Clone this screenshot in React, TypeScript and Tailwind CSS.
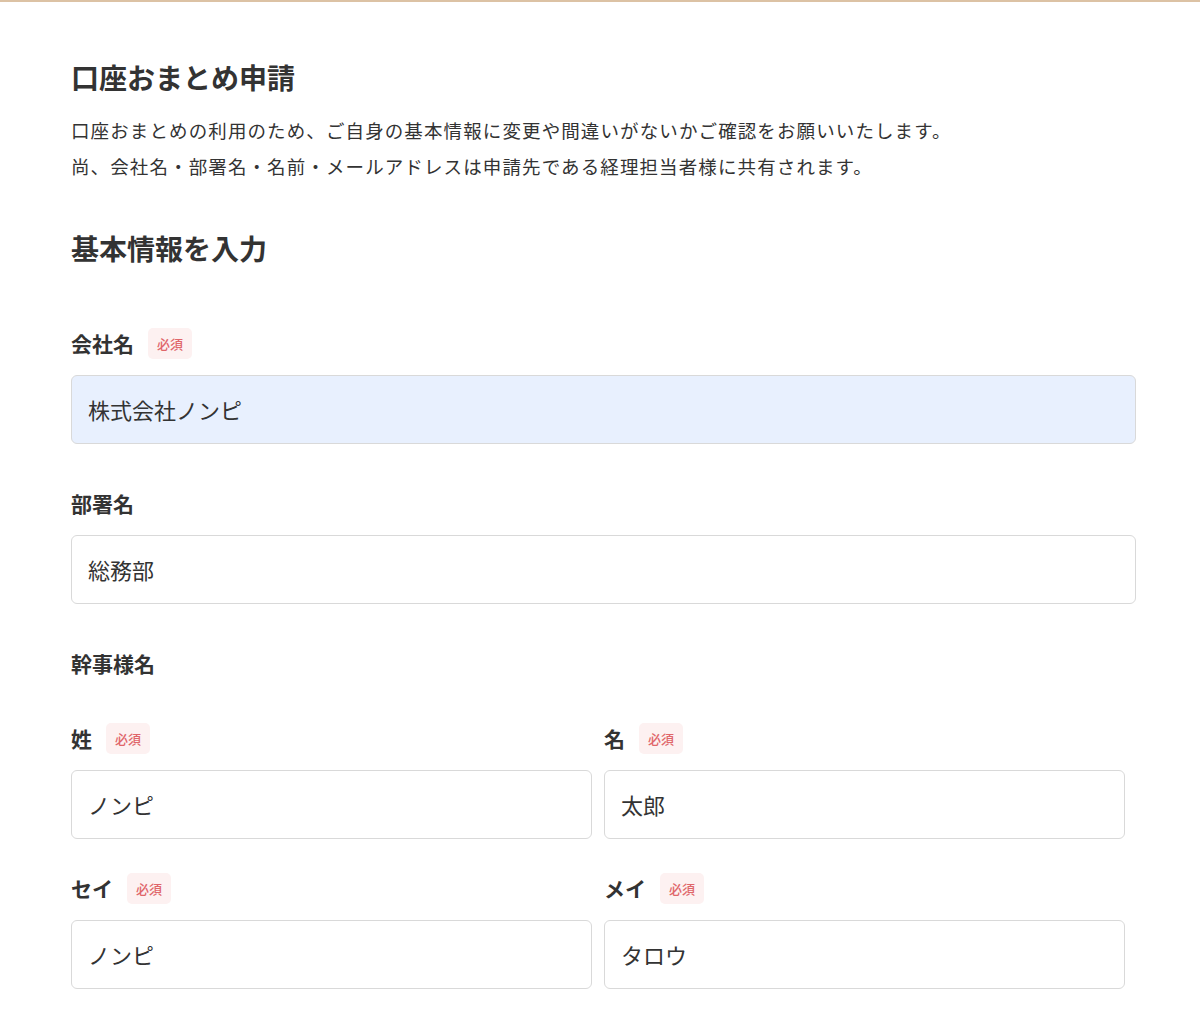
const font = { fontFamily: '"Noto Sans CJK JP", "Noto Sans", sans-serif' };

function Required() {
  return (
    <span className="ml-[14px] inline-flex h-[31px] w-[44px] items-center justify-center rounded-[5px] bg-[#fdf1f1] text-[13px] font-medium text-[#e0666a]">
      必須
    </span>
  );
}

function Label({ text, required }: { text: string; required?: boolean }) {
  return (
    <div className="flex h-[31px] items-center">
      <span className="text-[21px] font-bold leading-none text-[#333]">{text}</span>
      {required && <Required />}
    </div>
  );
}

function Input({ value, filled }: { value: string; filled?: boolean }) {
  return (
    <div
      className={`mt-4 flex h-[69px] items-center rounded-[6px] border border-[#d9d9d9] px-4 text-[22px] text-[#333] ${
        filled ? "bg-[#e8f0fe]" : "bg-white"
      }`}
    >
      {value}
    </div>
  );
}

export default function App() {
  return (
    <div className="min-h-screen bg-white" style={font}>
      <div className="h-[2px] bg-[#dcc2a4]" />
      <main className="px-[71px] pt-[55px] pb-10">
        <h1 className="text-[28px] font-bold leading-[40px] text-[#333]">口座おまとめ申請</h1>
        <p className="mt-[15px] text-[18.5px] leading-[36px] tracking-[0.06em] text-[#333]">
          口座おまとめの利用のため、ご自身の基本情報に変更や間違いがないかご確認をお願いいたします。
          <br />
          尚、会社名・部署名・名前・メールアドレスは申請先である経理担当者様に共有されます。
        </p>
        <h2 className="mt-[44px] text-[28px] font-bold leading-[40px] text-[#333]">基本情報を入力</h2>

        <div className="mt-[60px] w-[1065px]">
          <Label text="会社名" required />
          <Input value="株式会社ノンピ" filled />
        </div>

        <div className="mt-[44px] w-[1065px]">
          <Label text="部署名" />
          <Input value="総務部" />
        </div>

        <div className="mt-[44px]">
          <Label text="幹事様名" />
        </div>

        <div className="mt-[44px] grid w-[1054px] grid-cols-2 gap-x-3 gap-y-[34px]">
          <div>
            <Label text="姓" required />
            <Input value="ノンピ" />
          </div>
          <div>
            <Label text="名" required />
            <Input value="太郎" />
          </div>
          <div>
            <Label text="セイ" required />
            <Input value="ノンピ" />
          </div>
          <div>
            <Label text="メイ" required />
            <Input value="タロウ" />
          </div>
        </div>
      </main>
    </div>
  );
}
